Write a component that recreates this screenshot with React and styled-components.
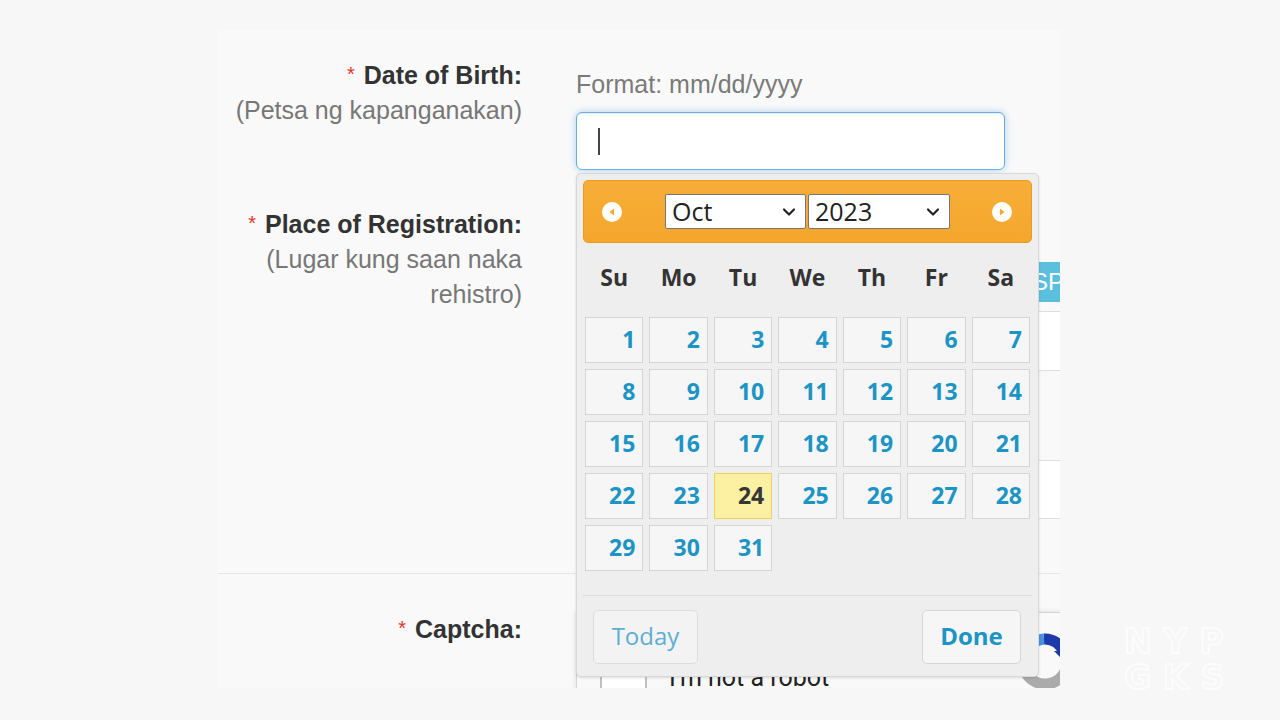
import React from 'react';
import styled, { createGlobalStyle } from 'styled-components';
import { ChevronDown } from 'lucide-react';

const GlobalStyle = createGlobalStyle`
  html, body { margin: 0; padding: 0; background: #f7f7f7; }
  body { font-family: "Liberation Sans", Arial, sans-serif; }
  * { box-sizing: border-box; }
`;

const Page = styled.div`
  position: relative;
  width: 1280px;
  height: 720px;
  overflow: hidden;
  background: #f7f7f7;
  padding: 30px 0 0 218px;
`;

const Panel = styled.div`
  width: 842px;
  height: 658px;
  background: #f9f9f9;
  overflow: hidden;
`;

const FormRow = styled.div`
  display: grid;
  grid-template-columns: 304px 484px;
  column-gap: 54px;
  align-items: start;
  padding-top: ${p => p.$pt || 0}px;
  height: ${p => (p.$h ? `${p.$h}px` : 'auto')};
  border-bottom: ${p => (p.$divider ? '1px solid #e6e6e6' : 'none')};
`;

const LabelCol = styled.div`
  text-align: right;
  font-size: 25px;
  line-height: 35px;
`;

const Label = styled.div`
  font-weight: 700;
  color: #333;
`;

const Req = styled.span`
  color: #e0352f;
  font-weight: 400;
  font-size: 20px;
  vertical-align: 3px;
  margin-right: 9px;
`;

const SubLabel = styled.div`
  color: #777;
`;

const Control = styled.div`
  padding-top: ${p => p.$pt || 0}px;
  min-width: 0;
`;

const Hint = styled.div`
  font-size: 25px;
  line-height: 35px;
  color: #7a7a7a;
  margin-bottom: 10px;
`;

const DateField = styled.div`
  position: relative;
  width: 429px;
  height: 58px;
`;

const DateInput = styled.input`
  width: 100%;
  height: 100%;
  border: 1px solid #66afe9;
  border-radius: 6px;
  background: #fff;
  outline: none;
  box-shadow: inset 0 1px 1px rgba(0, 0, 0, 0.075), 0 0 7px rgba(102, 175, 233, 0.55);
  font-size: 25px;
  padding: 0 22px;
`;

const Caret = styled.span`
  position: absolute;
  left: 22px;
  top: 16px;
  width: 2px;
  height: 27px;
  background: #444;
`;

const Picker = styled.div`
  position: absolute;
  top: calc(100% + 3px);
  left: 0;
  z-index: 10;
  width: 463px;
  padding: 6px;
  background: #eeeeee;
  border: 1px solid #d8d8d8;
  border-radius: 5px;
  box-shadow: 0 1px 3px rgba(0, 0, 0, 0.12);
  font-family: "Open Sans", "DejaVu Sans", sans-serif;
`;

const Header = styled.div`
  display: grid;
  grid-template-columns: 1fr auto 1fr;
  align-items: center;
  height: 63px;
  background: linear-gradient(#f7ad38, #f5a72c);
  border: 1px solid #eb9b1e;
  border-radius: 5px;
`;

const NavButton = styled.button`
  width: 22px;
  height: 22px;
  padding: 0;
  border: none;
  background: none;
  display: flex;
  justify-self: ${p => (p.$end ? 'end' : 'start')};
  margin: ${p => (p.$end ? '0 18px 0 0' : '0 0 0 17px')};
`;

const SelectGroup = styled.div`
  display: flex;
  gap: 2px;
`;

const SelectWrap = styled.div`
  position: relative;
  width: ${p => p.$w}px;
  height: 35px;
`;

const NativeSelect = styled.select`
  appearance: none;
  -webkit-appearance: none;
  width: 100%;
  height: 100%;
  border: 1px solid #767676;
  border-radius: 2px;
  background: #fff;
  color: #222;
  font-family: "Open Sans", "DejaVu Sans", sans-serif;
  font-size: 25px;
  line-height: 33px;
  padding: 0 0 0 6px;
  outline: none;
`;

const SelectChevron = styled(ChevronDown)`
  position: absolute;
  right: 7px;
  top: 50%;
  transform: translateY(-50%);
  pointer-events: none;
  color: #222;
`;

const DayHead = styled.div`
  display: grid;
  grid-template-columns: repeat(7, 1fr);
  column-gap: 6px;
  margin: 0 2px;
  height: 74px;
  padding-bottom: 6px;
  align-items: center;
`;

const DayName = styled.div`
  text-align: center;
  font-weight: 700;
  font-size: 23px;
  color: #333;
`;

const DayGrid = styled.div`
  display: grid;
  grid-template-columns: repeat(7, 1fr);
  grid-auto-rows: 46px;
  gap: 6px;
  margin: 0 2px;
`;

const DayCell = styled.div`
  display: flex;
  align-items: center;
  justify-content: flex-end;
  padding: 0 7px 3px 0;
  border: 1px solid ${p => (p.$today ? '#f3cf62' : '#d4d4d4')};
  background: ${p => (p.$today ? '#fcf0a3' : '#f6f6f6')};
  color: ${p => (p.$today ? '#363636' : '#1c94c4')};
  font-weight: 700;
  font-size: 23px;
`;

const ButtonPane = styled.div`
  display: flex;
  justify-content: space-between;
  margin-top: 24px;
  border-top: 1px solid #dcdcdc;
  padding: 14px 11px 6px 10px;
`;

const PaneButton = styled.button`
  width: ${p => p.$w}px;
  height: 54px;
  padding: 0 0 3px;
  border: 1px solid #d6d6d6;
  border-radius: 5px;
  background: #f6f6f6;
  color: #1c94c4;
  font-family: "Open Sans", "DejaVu Sans", sans-serif;
  font-size: 24px;
  font-weight: ${p => (p.$primary ? 700 : 400)};
  opacity: ${p => (p.$primary ? 1 : 0.7)};
`;

const Toolbar = styled.div`
  display: flex;
  justify-content: flex-end;
  height: 40px;
`;

const SpButton = styled.button`
  width: 40px;
  height: 40px;
  padding: 0 0 0 12px;
  border: none;
  background: #5bc0de;
  color: #fff;
  text-align: left;
  font-family: "Liberation Sans", Arial, sans-serif;
  font-size: 24px;
  white-space: nowrap;
  overflow: hidden;
`;

const RegionTable = styled.div`
  margin-top: 9px;
`;

const RegionRow = styled.div`
  height: ${p => p.$h}px;
  border-top: 1px solid #dedede;
  border-bottom: ${p => (p.$last ? '1px solid #dedede' : 'none')};
  background: ${p => (p.$white ? '#fff' : 'transparent')};
`;

const CaptchaBox = styled.div`
  display: flex;
  align-items: center;
  width: 510px;
  height: 130px;
  margin-top: 1px;
  padding: 0 7px 0 23px;
  border: 1px solid #d3d3d3;
  border-radius: 3px;
  background: #f9f9f9;
  box-shadow: 0 0 4px 1px rgba(0, 0, 0, 0.08);
`;

const CheckBox = styled.div`
  width: 47px;
  height: 48px;
  border: 2px solid #c1c1c1;
  border-radius: 3px;
  background: #fff;
`;

const RobotText = styled.span`
  margin-left: 22px;
  font-family: Roboto, "Liberation Sans", sans-serif;
  font-size: 25px;
  color: #222;
`;

const CaptchaLogo = styled.svg`
  margin-left: auto;
  align-self: flex-start;
  margin-top: 16px;
`;

const Watermark = styled.div`
  position: absolute;
  left: 1124px;
  top: 624px;
  display: flex;
  flex-direction: column;
`;

const WatermarkLine = styled.span`
  display: block;
  height: 36px;
  font-family: "DejaVu Sans", sans-serif;
  font-weight: 700;
  font-size: 33px;
  line-height: 36px;
  letter-spacing: 12px;
  color: transparent;
  -webkit-text-stroke: 1.5px rgba(255, 255, 255, 0.85);
`;

const CircleArrow = ({ dir }) => (
  <svg width="22" height="22" viewBox="0 0 22 22">
    <circle cx="11" cy="11" r="10" fill="#fff" />
    {dir === 'left' ? (
      <polygon points="13,7.5 8.5,11 13,14.5" fill="#f6a828" />
    ) : (
      <polygon points="9,7.5 13.5,11 9,14.5" fill="#f6a828" />
    )}
  </svg>
);

const dayNames = ['Su', 'Mo', 'Tu', 'We', 'Th', 'Fr', 'Sa'];
const days = Array.from({ length: 31 }, (_, i) => i + 1);

export default function App() {
  return (
    <>
      <GlobalStyle />
      <Page>
        <Panel>
          <FormRow $pt={27} $h={176}>
            <LabelCol>
              <Label>
                <Req>*</Req>Date of Birth:
              </Label>
              <SubLabel>(Petsa ng kapanganakan)</SubLabel>
            </LabelCol>
            <Control $pt={10}>
              <Hint>Format: mm/dd/yyyy</Hint>
              <DateField>
                <DateInput type="text" aria-label="Date of Birth" />
                <Caret />
                <Picker>
                  <Header>
                    <NavButton aria-label="Prev">
                      <CircleArrow dir="left" />
                    </NavButton>
                    <SelectGroup>
                      <SelectWrap $w={141}>
                        <NativeSelect defaultValue="Oct">
                          <option>Oct</option>
                        </NativeSelect>
                        <SelectChevron size={20} strokeWidth={2.6} />
                      </SelectWrap>
                      <SelectWrap $w={142}>
                        <NativeSelect defaultValue="2023">
                          <option>2023</option>
                        </NativeSelect>
                        <SelectChevron size={20} strokeWidth={2.6} />
                      </SelectWrap>
                    </SelectGroup>
                    <NavButton $end aria-label="Next">
                      <CircleArrow dir="right" />
                    </NavButton>
                  </Header>
                  <DayHead>
                    {dayNames.map(d => (
                      <DayName key={d}>{d}</DayName>
                    ))}
                  </DayHead>
                  <DayGrid>
                    {days.map(d => (
                      <DayCell key={d} $today={d === 24}>
                        {d}
                      </DayCell>
                    ))}
                  </DayGrid>
                  <ButtonPane>
                    <PaneButton $w={105}>Today</PaneButton>
                    <PaneButton $w={99} $primary>
                      Done
                    </PaneButton>
                  </ButtonPane>
                </Picker>
              </DateField>
            </Control>
          </FormRow>

          <FormRow $h={368} $divider>
            <LabelCol>
              <Label>
                <Req>*</Req>Place of Registration:
              </Label>
              <SubLabel>(Lugar kung saan naka rehistro)</SubLabel>
            </LabelCol>
            <Control $pt={56}>
              <Toolbar>
                <SpButton>SP</SpButton>
              </Toolbar>
              <RegionTable>
                <RegionRow $h={59} $white />
                <RegionRow $h={90} />
                <RegionRow $h={59} $white $last />
              </RegionTable>
            </Control>
          </FormRow>

          <FormRow $pt={37}>
            <LabelCol>
              <Label>
                <Req>*</Req>Captcha:
              </Label>
            </LabelCol>
            <Control>
              <CaptchaBox>
                <CheckBox />
                <RobotText>I'm not a robot</RobotText>
                <CaptchaLogo width="64" height="64" viewBox="0 0 64 64">
                  <path d="M12 28 A20 20 0 0 1 30 10" fill="none" stroke="#4a90e2" strokeWidth="11" />
                  <path d="M30 10 A20 20 0 0 1 50 24" fill="none" stroke="#1c3aa9" strokeWidth="11" />
                  <polygon points="40,22 60,22 56,38" fill="#1c3aa9" />
                  <path d="M52 40 A22 22 0 0 1 12 44" fill="none" stroke="#ababab" strokeWidth="11" />
                </CaptchaLogo>
              </CaptchaBox>
            </Control>
          </FormRow>
        </Panel>
        <Watermark>
          <WatermarkLine>NYP</WatermarkLine>
          <WatermarkLine>GKS</WatermarkLine>
        </Watermark>
      </Page>
    </>
  );
}
